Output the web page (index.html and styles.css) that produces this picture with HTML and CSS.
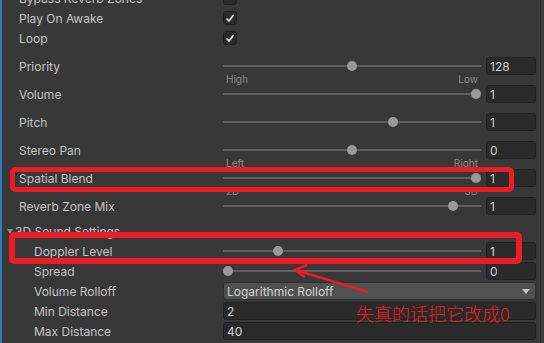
FILE: index.html
```html
<!DOCTYPE html>
<html>
<head>
  <meta charset="utf-8">
  <link rel="stylesheet" href="styles.css">
</head>
<body>
  <div class="window">
    <div class="accent"></div>

    <div class="inspector">
      <div class="row">
        <span class="label">Bypass Reverb Zones</span>
        <div class="control"><span class="checkbox"></span></div>
      </div>
      <div class="row">
        <span class="label">Play On Awake</span>
        <div class="control">
          <span class="checkbox"><svg viewBox="0 0 14 14" width="14" height="14"><polyline points="3.5,7.5 6,10 10.5,4" /></svg></span>
        </div>
      </div>
      <div class="row">
        <span class="label">Loop</span>
        <div class="control">
          <span class="checkbox"><svg viewBox="0 0 14 14" width="14" height="14"><polyline points="3.5,7.5 6,10 10.5,4" /></svg></span>
        </div>
      </div>

      <div class="row slider-row">
        <span class="label">Priority</span>
        <div class="slider">
          <div class="track-wrap">
            <div class="track"></div>
            <div class="thumb" style="left: calc(5px + (100% - 10px) * 0.5);"></div>
            <div class="range-labels"><span>High</span><span>Low</span></div>
          </div>
          <div class="field">128</div>
        </div>
      </div>
      <div class="row slider-row">
        <span class="label">Volume</span>
        <div class="slider">
          <div class="track-wrap">
            <div class="track"></div>
            <div class="thumb" style="left: calc(5px + (100% - 10px) * 1);"></div>
          </div>
          <div class="field">1</div>
        </div>
      </div>
      <div class="row slider-row">
        <span class="label">Pitch</span>
        <div class="slider">
          <div class="track-wrap">
            <div class="track"></div>
            <div class="thumb" style="left: calc(5px + (100% - 10px) * 0.667);"></div>
          </div>
          <div class="field">1</div>
        </div>
      </div>
      <div class="row slider-row">
        <span class="label">Stereo Pan</span>
        <div class="slider">
          <div class="track-wrap">
            <div class="track"></div>
            <div class="thumb" style="left: calc(5px + (100% - 10px) * 0.5);"></div>
            <div class="range-labels"><span>Left</span><span>Right</span></div>
          </div>
          <div class="field">0</div>
        </div>
      </div>
      <div class="row slider-row">
        <span class="label">Spatial Blend</span>
        <div class="slider">
          <div class="track-wrap">
            <div class="track"></div>
            <div class="thumb" style="left: calc(5px + (100% - 10px) * 1);"></div>
            <div class="range-labels"><span>2D</span><span>3D</span></div>
          </div>
          <div class="field">1</div>
        </div>
      </div>
      <div class="row slider-row">
        <span class="label">Reverb Zone Mix</span>
        <div class="slider">
          <div class="track-wrap">
            <div class="track"></div>
            <div class="thumb" style="left: calc(5px + (100% - 10px) * 0.909);"></div>
          </div>
          <div class="field">1</div>
        </div>
      </div>

      <div class="foldout">
        <span class="fold-arrow"></span>
        <span class="label">3D Sound Settings</span>
      </div>

      <div class="row">
        <span class="label nested">Doppler Level</span>
        <div class="slider">
          <div class="track-wrap">
            <div class="track"></div>
            <div class="thumb" style="left: calc(5px + (100% - 10px) * 0.2);"></div>
          </div>
          <div class="field">1</div>
        </div>
      </div>
      <div class="row">
        <span class="label nested">Spread</span>
        <div class="slider">
          <div class="track-wrap">
            <div class="track"></div>
            <div class="thumb" style="left: calc(5px + (100% - 10px) * 0);"></div>
          </div>
          <div class="field">0</div>
        </div>
      </div>
      <div class="row">
        <span class="label nested">Volume Rolloff</span>
        <div class="dropdown">
          <span>Logarithmic Rolloff</span>
          <span class="drop-arrow"></span>
        </div>
      </div>
      <div class="row">
        <span class="label nested">Min Distance</span>
        <div class="field wide">2</div>
      </div>
      <div class="row">
        <span class="label nested">Max Distance</span>
        <div class="field wide">40</div>
      </div>
    </div>

    <div class="scrollbar"></div>

    <!-- annotations drawn over the inspector -->
    <div class="mark mark-blend"></div>
    <div class="mark mark-doppler"></div>
    <svg class="arrow" width="544" height="343" viewBox="0 0 544 343">
      <line x1="368" y1="292" x2="296" y2="270" />
      <polyline points="307,265 295,270 305,277" />
    </svg>
    <div class="note">失真的话把它改成0</div>
  </div>
</body>
</html>
```

FILE: styles.css
```css
body {
  margin: 0;
  background: #383838;
  font-family: Inter, "Noto Sans", sans-serif;
  font-size: 12px;
  color: #c4c4c4;
}

.window {
  position: relative;
  display: flex;
  height: 343px;
  overflow: hidden;
}

.accent {
  width: 2px;
  background: #2c7dc4;
  flex-shrink: 0;
}

.inspector {
  flex: 1;
  margin-top: -12px;
  padding: 0 4px 0 17px;
}

.scrollbar {
  width: 3px;
  flex-shrink: 0;
  background: #3d3d3d;
  border-left: 1px solid #313131;
}

.row {
  display: grid;
  grid-template-columns: 204px 1fr;
  align-items: center;
  height: 20px;
}

.slider-row {
  margin-top: 8px;
}

.label {
  white-space: nowrap;
  padding-top: 1px;
}

.label.nested {
  padding-left: 15px;
}

.checkbox {
  display: block;
  width: 14px;
  height: 14px;
  box-sizing: border-box;
  background: #2a2a2a;
  border: 1px solid #1f1f1f;
  border-radius: 3px;
}

.checkbox svg {
  display: block;
  margin: -1px;
}

.checkbox polyline {
  fill: none;
  stroke: #e6e6e6;
  stroke-width: 1.6;
}

.slider {
  display: flex;
  align-items: center;
  gap: 5px;
}

.track-wrap {
  position: relative;
  flex: 1;
  height: 20px;
}

.track {
  position: absolute;
  left: 0;
  right: 0;
  top: 9px;
  height: 2px;
  background: #5e5e5e;
}

.thumb {
  position: absolute;
  top: 5px;
  width: 10px;
  height: 10px;
  margin-left: -5px;
  border-radius: 50%;
  background: #999999;
}

.range-labels {
  position: absolute;
  left: 3px;
  right: 3px;
  top: 17px;
  display: flex;
  justify-content: space-between;
  font-size: 10px;
  line-height: 12px;
  color: #8a8a8a;
}

.field {
  width: 50px;
  height: 18px;
  box-sizing: border-box;
  background: #2a2a2a;
  border: 1px solid #212121;
  border-radius: 3px;
  padding: 1px 0 0 3px;
  line-height: 15px;
  color: #d2d2d2;
}

.field.wide {
  width: auto;
}

.dropdown {
  display: flex;
  align-items: center;
  justify-content: space-between;
  height: 18px;
  box-sizing: border-box;
  padding: 1px 5px 0 3px;
  background: #515151;
  border: 1px solid #303030;
  border-radius: 3px;
  color: #d2d2d2;
}

.drop-arrow {
  width: 0;
  height: 0;
  border-left: 4px solid transparent;
  border-right: 4px solid transparent;
  border-top: 5px solid #c4c4c4;
}

.foldout {
  display: flex;
  align-items: center;
  gap: 2px;
  height: 20px;
  margin: 5px 0 0 -12px;
}

.fold-arrow {
  width: 0;
  height: 0;
  border-left: 3px solid transparent;
  border-right: 3px solid transparent;
  border-top: 5px solid #8a8a8a;
}

.mark {
  position: absolute;
  box-sizing: border-box;
  border: 5px solid #ec1c24;
  border-radius: 5px;
}

.mark-blend {
  left: 10px;
  top: 167px;
  width: 504px;
  height: 25px;
}

.mark-doppler {
  left: 9px;
  top: 232px;
  width: 513px;
  height: 32px;
  border-width: 6px;
}

.arrow {
  position: absolute;
  left: 0;
  top: 0;
  pointer-events: none;
}

.arrow line,
.arrow polyline {
  fill: none;
  stroke: #ec1c24;
  stroke-width: 2.5;
}

.note {
  position: absolute;
  left: 356px;
  top: 302px;
  font-family: "Noto Sans CJK SC", sans-serif;
  font-size: 18px;
  font-weight: 300;
  line-height: 22px;
  color: #ec1c24;
}
```
